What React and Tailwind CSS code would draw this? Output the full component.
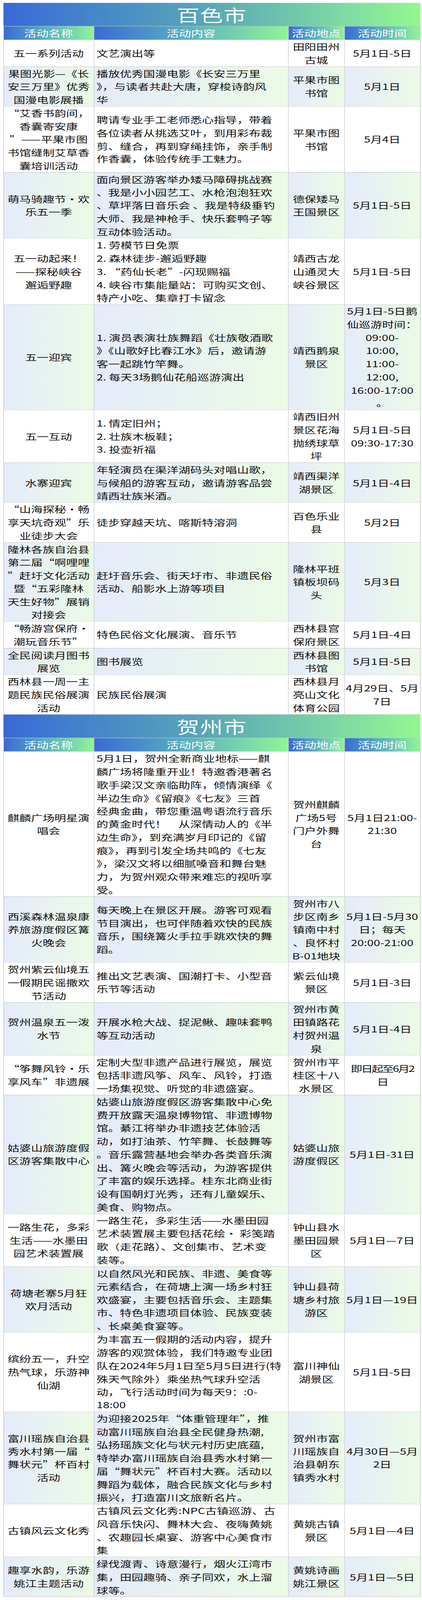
const baise = [
  { name: "五一系列活动", content: "文艺演出等", place: "田阳田州\n古城", time: "5月1日-5日" },
  {
    name: "果图光影—《长\n安三万里》优秀\n国漫电影展播",
    content: "播放优秀国漫电影《长安三万里\n》，与读者共赴大唐，穿梭诗韵风\n华",
    place: "平果市图\n书馆",
    time: "5月1日",
  },
  {
    name: "“艾香书韵间，\n香囊寄安康\n”——平果市图\n书馆缝制艾草香\n囊培训活动",
    content: "聘请专业手工老师悉心指导，带着\n各位读者从挑选艾叶，到用彩布裁\n剪、缝合，再到穿绳挂饰，亲手制\n作香囊，体验传统手工魅力。",
    place: "平果市图\n书馆",
    time: "5月4日",
  },
  {
    name: "萌马骑趣节•欢\n乐五一季",
    content: "面向景区游客举办矮马障碍挑战赛\n、我是小小园艺工、水枪泡泡狂欢\n、草坪落日音乐会 、我是特级垂钓\n大师、我是神枪手、快乐套鸭子等\n互动体验活动。",
    place: "德保矮马\n王国景区",
    time: "5月1日-5日",
  },
  {
    name: "五一动起来！\n——探秘峡谷\n邂逅野趣",
    content: "1. 劳模节日免票\n2. 森林徒步-邂逅野趣\n3. “药仙长老”-闪现赐福\n4. 峡谷市集能量站：可购买文创、\n特产小吃、集章打卡留念",
    place: "靖西古龙\n山通灵大\n峡谷景区",
    time: "5月1日-5日",
  },
  {
    name: "五一迎宾",
    content: "1. 演员表演壮族舞蹈《壮族敬酒歌\n》《山歌好比春江水》后，邀请游\n客一起跳竹竿舞。\n2. 每天3场鹅仙花船巡游演出",
    place: "靖西鹅泉\n景区",
    time: "5月1日-5日鹅\n仙巡游时间：\n09:00-\n10:00,\n11:00-\n12:00,\n16:00-17:00\n。",
  },
  {
    name: "五一互动",
    content: "1. 情定旧州；\n2. 壮族木板鞋；\n3. 投壶祈福",
    place: "靖西旧州\n景区花海\n抛绣球草\n坪",
    time: "5月1日-5日\n09:30-17:30",
  },
  {
    name: "水寨迎宾",
    content: "年轻演员在渠洋湖码头对唱山歌，\n与候船的游客互动，邀请游客品尝\n靖西壮族米酒。",
    place: "靖西渠洋\n湖景区",
    time: "5月1日-4日",
  },
  {
    name: "“山海探秘·畅\n享天坑奇观”乐\n业徒步大会",
    content: "徒步穿越天坑、喀斯特溶洞",
    place: "百色乐业\n县",
    time: "5月2日",
  },
  {
    name: "隆林各族自治县\n第二届“啊哩哩\n”赶圩文化活动\n暨“五彩隆林\n天生好物”展销\n对接会",
    content: "赶圩音乐会、街天圩市、非遗民俗\n活动、船影水上游等项目",
    place: "隆林平班\n镇板坝码\n头",
    time: "5月3日",
  },
  {
    name: "“畅游宫保府·\n潮玩音乐节”",
    content: "特色民俗文化展演、音乐节",
    place: "西林县宫\n保府景区",
    time: "5月1日-4日",
  },
  { name: "全民阅读月图书\n展览", content: "图书展览", place: "西林县图\n书馆", time: "5月1日-5日" },
  {
    name: "西林县一周一主\n题民族民俗展演\n活动",
    content: "民族民俗展演",
    place: "西林县月\n亮山文化\n体育公园",
    time: "4月29日、5月\n7日",
  },
]

const hezhou = [
  {
    name: "麒麟广场明星演\n唱会",
    content:
      "5月1日，贺州全新商业地标——麒\n麟广场将隆重开业！特邀香港著名\n歌手梁汉文亲临助阵，倾情演绎《\n半边生命》《留痕》《七友》三首\n经典金曲，带您重温粤语流行音乐\n的黄金时代！　从深情动人的《半\n边生命》，到充满岁月印记的《留\n痕》，再到引发全场共鸣的《七友\n》，梁汉文将以细腻嗓音和舞台魅\n力，为贺州观众带来难忘的视听享\n受。",
    place: "贺州麒麟\n广场5号\n门户外舞\n台",
    time: "5月1日21:00-\n21:30",
  },
  {
    name: "西溪森林温泉康\n养旅游度假区篝\n火晚会",
    content: "每天晚上在景区开展。游客可观看\n节目演出，也可伴随着欢快的民族\n音乐，围绕篝火手拉手跳欢快的舞\n蹈。",
    place: "贺州市八\n步区南乡\n镇南中村\n、良怀村\nB-01地块",
    time: "5月1日-5月30\n日；每天\n20:00-21:00",
  },
  {
    name: "贺州紫云仙境五\n一假期民谣撒欢\n节活动",
    content: "推出文艺表演、国潮打卡、小型音\n乐节等活动",
    place: "紫云仙境\n景区",
    time: "5月1日-3日",
  },
  {
    name: "贺州温泉五一泼\n水节",
    content: "开展水枪大战、捉泥鳅、趣味套鸭\n等互动活动",
    place: "贺州市黄\n田镇路花\n村贺州温\n泉",
    time: "5月1日-4日",
  },
  {
    name: "“筝舞风铃•乐\n享风车”非遗展",
    content: "定制大型非遗产品进行展览，展览\n包括非遗风筝、风车、风铃，打造\n一场集视觉、听觉的非遗盛宴。",
    place: "贺州市平\n桂区十八\n水景区",
    time: "即日起至6月2\n日",
    tight: true,
  },
  {
    name: "姑婆山旅游度假\n区游客集散中心",
    content:
      "姑婆山旅游度假区游客集散中心免\n费开放露天温泉博物馆、非遗博物\n馆。綦江将举办非遗技艺体验活\n动，如打油茶、竹竿舞、长鼓舞等\n。音乐露营基地会举办各类音乐演\n出、篝火晚会等活动，为游客提供\n了丰富的娱乐选择。桂东北商业街\n设有国朝灯光秀，还有儿童娱乐、\n美食、购物点。",
    place: "姑婆山旅\n游度假区",
    time: "5月1日-31日",
  },
  {
    name: "一路生花，多彩\n生活——水墨田\n园艺术装置展",
    content: "一路生花，多彩生活——水墨田园\n艺术装置展主要包括花绘· 彩笺踏\n歌（走花路）、文创集市、艺术变\n装等。",
    place: "钟山县水\n墨田园景\n区",
    time: "5月1日—7日",
  },
  {
    name: "荷塘老寨5月狂\n欢月活动",
    content: "以自然风光和民族、非遗、美食等\n元素结合，在荷塘上演一场乡村狂\n欢盛宴，主要包括音乐会、主题集\n市、特色非遗项目体验、民族变装\n、长桌美食宴等。",
    place: "钟山县荷\n塘乡村旅\n游区",
    time: "5月1日—19日",
  },
  {
    name: "缤纷五一，升空\n热气球，乐游神\n仙湖",
    content: "为丰富五一假期的活动内容，提升\n游客的观赏体验，我们特邀专业团\n队在2024年5月1日至5月5日进行(特\n殊天气除外）乘坐热气球升空活\n动，飞行活动时间为每天9：:0-\n18:00",
    place: "富川神仙\n湖景区",
    time: "5月1日-5日",
  },
  {
    name: "富川瑶族自治县\n秀水村第一届“\n舞状元”杯百村\n活动",
    content: "为迎接2025年“体重管理年”，推\n动富川瑶族自治县全民健身热潮,\n弘扬瑶族文化与状元村历史底蕴,\n特举办富川瑶族自治县秀水村第一\n届“舞状元”杯百村大赛。活动以\n舞蹈为载体，融合民族文化与乡村\n振兴，打造富川文旅新名片。",
    place: "贺州市富\n川瑶族自\n治县朝东\n镇秀水村",
    time: "4月30日—5月\n2日",
  },
  {
    name: "古镇风云文化秀",
    content: "古镇风云文化秀:NPC古镇巡游、古\n风音乐快闪、舞林大会、夜嗨黄姚\n、农趣园长桌宴、游客中心美食市\n集",
    place: "黄姚古镇\n景区",
    time: "5月1日—4日",
  },
  {
    name: "趣享水韵，乐游\n姚江主题活动",
    content: "绿伐渡青、诗意漫行，烟火江湾市\n集，田园趣骑、亲子同欢，水上溜\n球等。",
    place: "黄姚诗画\n姚江景区",
    time: "5月1日—5日",
  },
]

const heads = ["活动名称", "活动内容", "活动地点", "活动时间"]

// each line gets a fixed height so mixed font metrics can't grow the rows
function Lines({ text, className = "" }) {
  return (
    <div className={className}>
      {text.split("\n").map((line, i) => (
        <div key={i} className="h-[36.75px] leading-[36.75px] whitespace-pre">
          {line}
        </div>
      ))}
    </div>
  )
}

function Row({ item, shaded }) {
  const bg = shaded ? "bg-linear-to-r from-[#e5ebfb] to-[#ebfbe5]" : "bg-white"
  return (
    <div className="grid grid-cols-[186px_398px_115px_155px] border-b border-[#b0b0b0]">
      <div className={`flex items-center justify-center border-l border-r border-[#bdbdbd] ${bg}`}>
        <Lines text={item.name} className="text-center" />
      </div>
      <div className={`flex items-center pl-[5px] border-r border-[#bdbdbd] ${bg}`}>
        <Lines text={item.content} />
      </div>
      <div className={`flex items-center justify-center border-r border-[#bdbdbd] ${bg}`}>
        <Lines text={item.place} className="text-center" />
      </div>
      <div className={`flex items-center justify-center border-r border-[#bdbdbd] ${bg}`}>
        <Lines text={item.time} className={item.tight ? "text-center tracking-[-2.5px]" : "text-center"} />
      </div>
    </div>
  )
}

function Section({ city, rows }) {
  return (
    <div>
      {/* city banner */}
      <div className="h-[66px] flex items-center justify-center bg-linear-to-r from-[#3a68d6] via-[#5ca8b5] to-[#93f88f] border-b border-[#9cb0a0]">
        <span className="text-white text-[47px] leading-none tracking-[1px]">{city}</span>
      </div>
      {/* column header */}
      <div className="grid grid-cols-[186px_398px_115px_155px] h-[38px] border-b border-[#b0b0b0]">
        {heads.map((h, i) => (
          <div
            key={h}
            className={`flex items-center justify-center bg-linear-to-r from-[#3d69d4] to-[#90f592] border-r border-[#b8c4bc] ${i === 0 ? "border-l" : ""}`}
          >
            <span className="text-white text-[25px] leading-none">{h}</span>
          </div>
        ))}
      </div>
      {rows.map((item, index) => (
        <Row key={index} item={item} shaded={index % 2 === 1} />
      ))}
    </div>
  )
}

export default function App() {
  // the source table is a stretched image: widen glyphs, and fit the tall table in the window
  return (
    <div className="h-screen overflow-hidden bg-white">
      <div className="w-[860.5px] pt-2 pl-[6.5px] origin-top-left scale-x-125 scale-y-[0.9151] font-['Noto_Sans_CJK_SC',sans-serif] text-[24px] text-[#111111]">
        <Section city="百色市" rows={baise} />
        <Section city="贺州市" rows={hezhou} />
      </div>
    </div>
  )
}
